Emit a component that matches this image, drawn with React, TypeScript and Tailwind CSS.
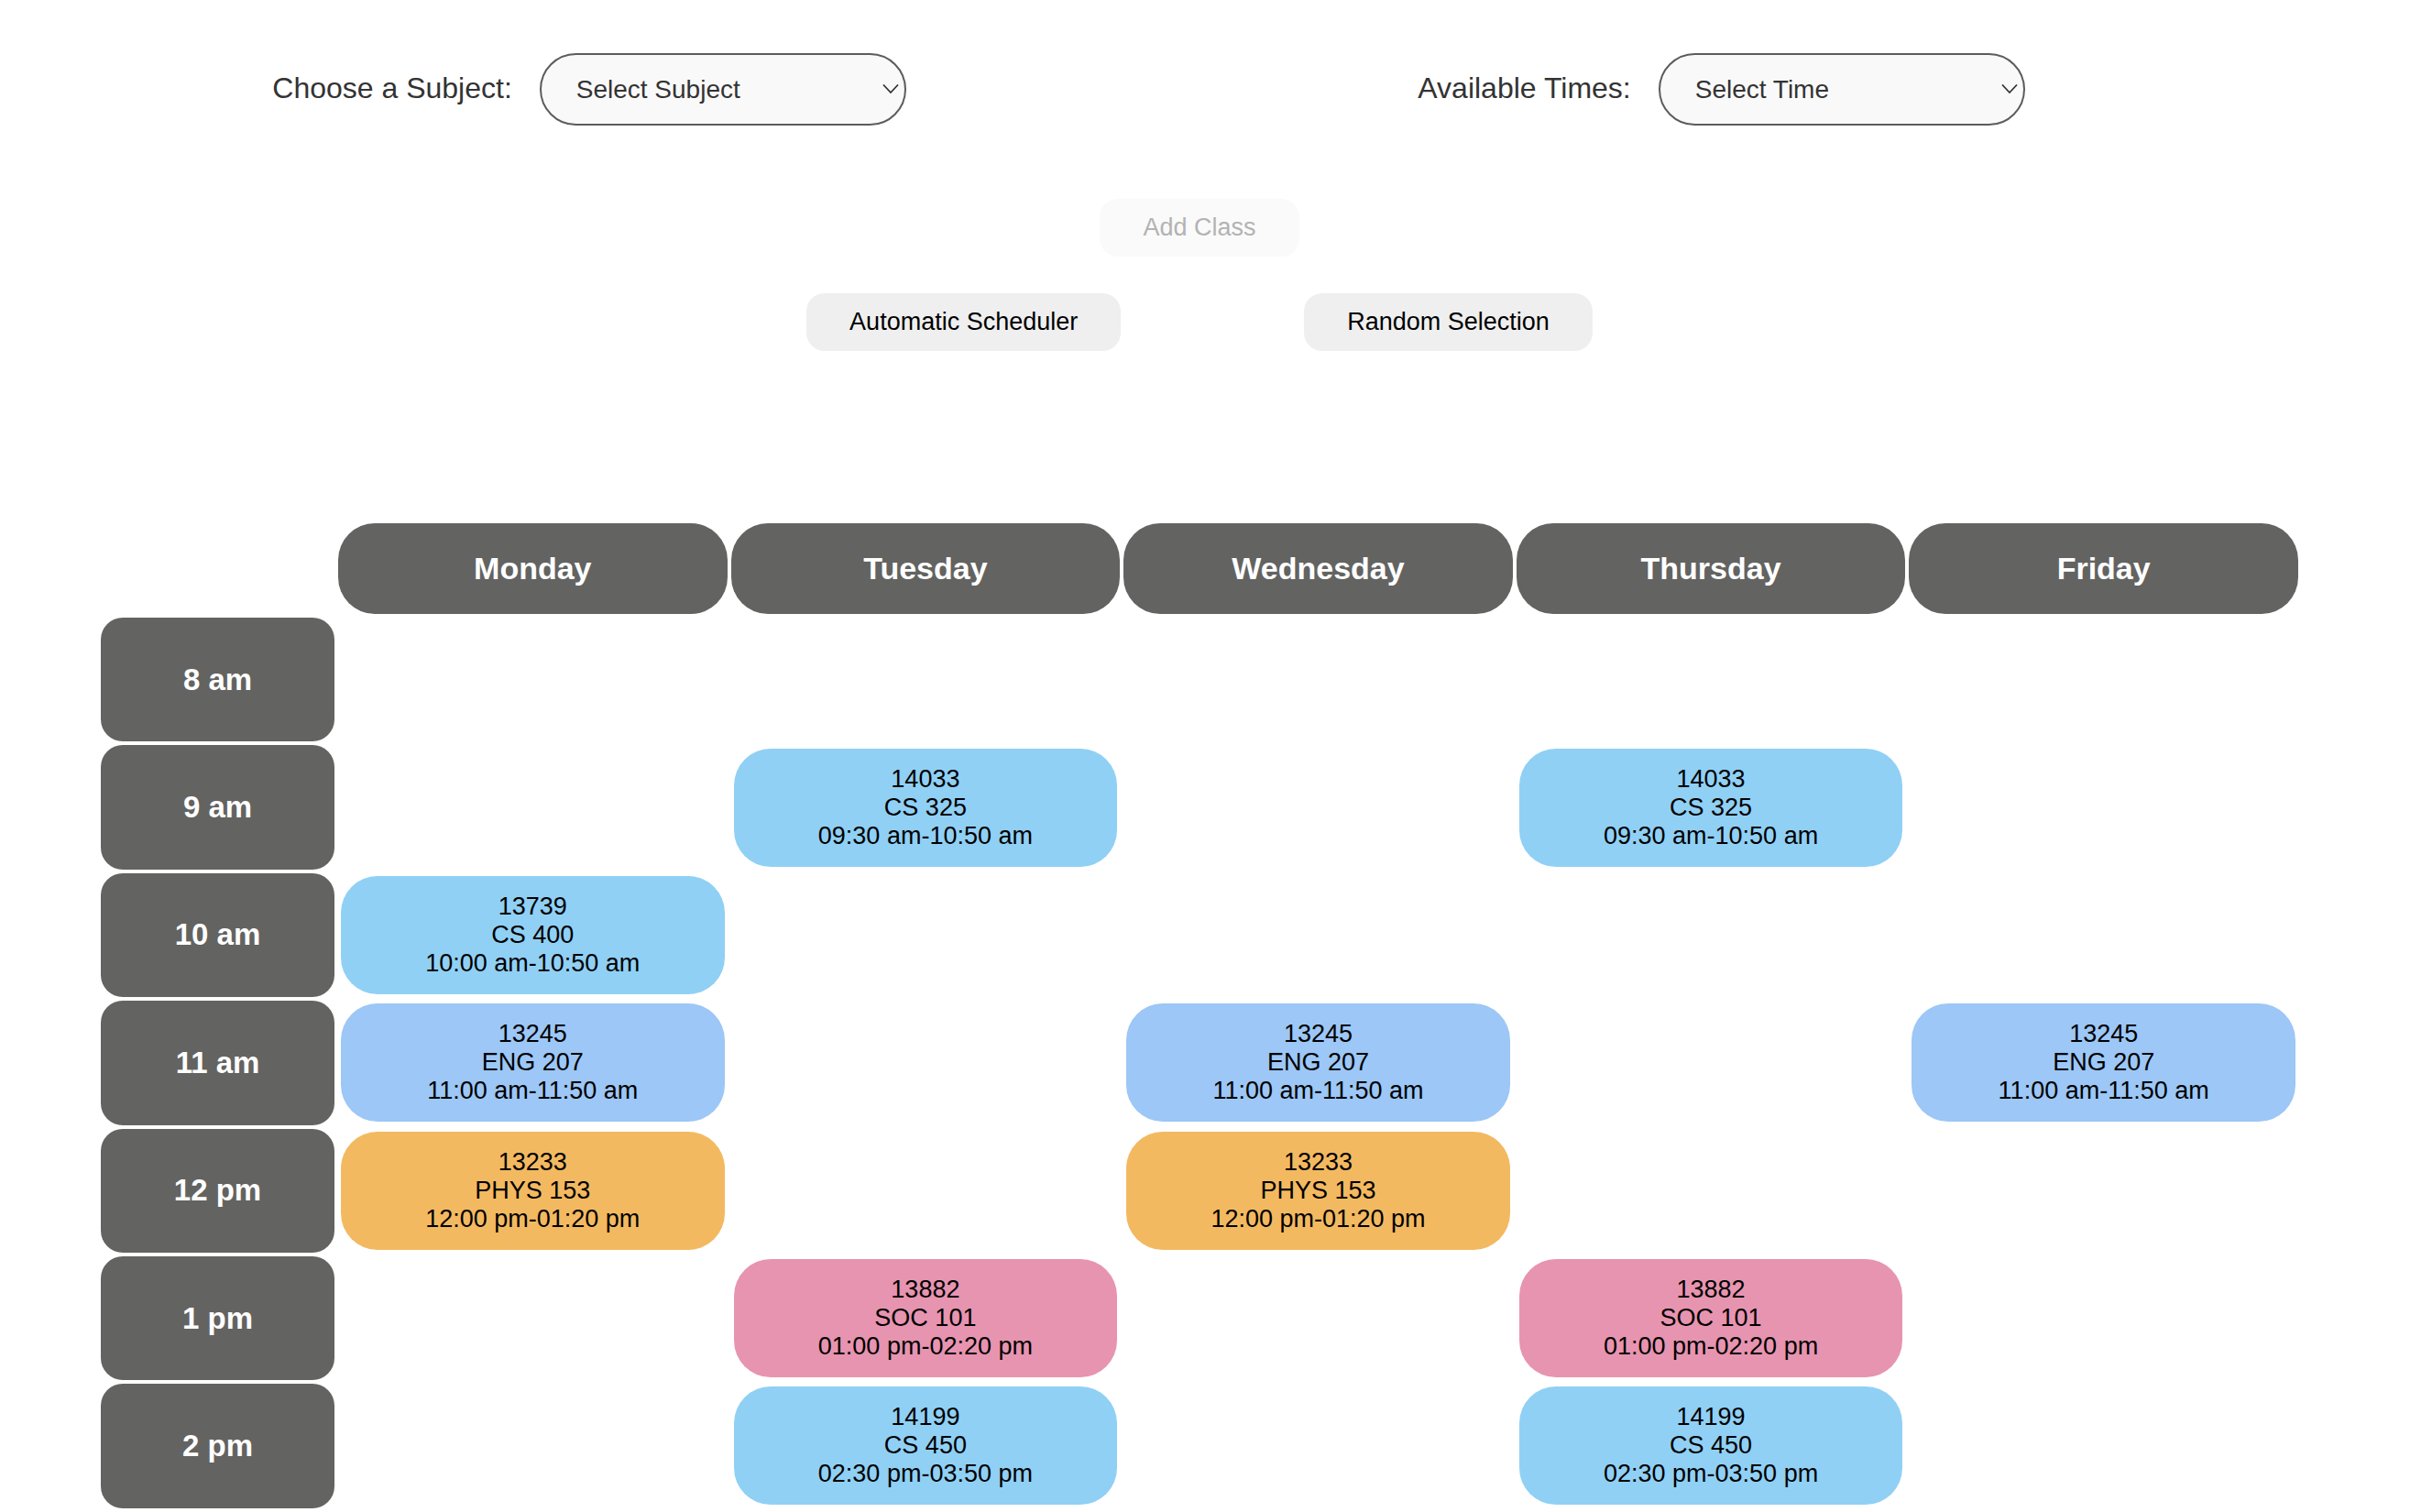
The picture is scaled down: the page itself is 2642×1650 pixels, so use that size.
import React from "react";

type Course = {
  crn: string;
  name: string;
  time: string;
  color: string;
};

const days = ["Monday", "Tuesday", "Wednesday", "Thursday", "Friday"];

const cs325: Course = { crn: "14033", name: "CS 325", time: "09:30 am-10:50 am", color: "bg-[#90d0f5]" };
const cs400: Course = { crn: "13739", name: "CS 400", time: "10:00 am-10:50 am", color: "bg-[#90d0f5]" };
const eng207: Course = { crn: "13245", name: "ENG 207", time: "11:00 am-11:50 am", color: "bg-[#9cc7f6]" };
const phys153: Course = { crn: "13233", name: "PHYS 153", time: "12:00 pm-01:20 pm", color: "bg-[#f3b961]" };
const soc101: Course = { crn: "13882", name: "SOC 101", time: "01:00 pm-02:20 pm", color: "bg-[#e794b0]" };
const cs450: Course = { crn: "14199", name: "CS 450", time: "02:30 pm-03:50 pm", color: "bg-[#90d0f5]" };

const rows: { hour: string; cells: (Course | null)[] }[] = [
  { hour: "8 am", cells: [null, null, null, null, null] },
  { hour: "9 am", cells: [null, cs325, null, cs325, null] },
  { hour: "10 am", cells: [cs400, null, null, null, null] },
  { hour: "11 am", cells: [eng207, null, eng207, null, eng207] },
  { hour: "12 pm", cells: [phys153, null, phys153, null, null] },
  { hour: "1 pm", cells: [null, soc101, null, soc101, null] },
  { hour: "2 pm", cells: [null, cs450, null, cs450, null] },
  { hour: "", cells: [null, null, null, null, null] },
];

function Picker({ id, label, placeholder }: { id: string; label: string; placeholder: string }) {
  return (
    <div className="flex items-baseline gap-[30px] text-[#333333]">
      <label htmlFor={id} className="text-[32px] leading-[37px]">
        {label}
      </label>
      <div className="relative">
        <select
          id={id}
          className="block h-[79px] w-[400px] appearance-none rounded-[40px] border-2 border-[#5c5c5c] bg-[#f9f9f9] px-[38px] text-[28px]"
        >
          <option>{placeholder}</option>
        </select>
        <svg
          aria-hidden="true"
          viewBox="0 0 18 10"
          className="pointer-events-none absolute top-[34px] right-2 h-[10px] w-[18px]"
          fill="none"
          stroke="#333333"
          strokeWidth="1.7"
        >
          <path d="M1 0.5 L9 9 L17 0.5" />
        </svg>
      </div>
    </div>
  );
}

function ActionButton({ children, disabled }: { children: React.ReactNode; disabled?: boolean }) {
  return (
    <button
      type="button"
      disabled={disabled}
      className="h-[63px] rounded-[20px] bg-[#efefef] px-[47px] text-[27px] text-black disabled:bg-[#fafafa] disabled:text-[#b3b3b3]"
    >
      {children}
    </button>
  );
}

function CourseCard({ course }: { course: Course }) {
  return (
    <div
      className={`flex h-[129px] flex-col items-center justify-center rounded-[40px] text-[27px] leading-[31px] text-black ${course.color}`}
    >
      <span>{course.crn}</span>
      <span>{course.name}</span>
      <span>{course.time}</span>
    </div>
  );
}

export default function App() {
  return (
    <main className="h-screen overflow-hidden bg-white pr-6 font-['Liberation_Sans',Arial,sans-serif]">
      <div className="flex justify-around pt-[58px] pr-[129px] pl-[18px]">
        <Picker id="subject" label="Choose a Subject:" placeholder="Select Subject" />
        <Picker id="time" label="Available Times:" placeholder="Select Time" />
      </div>

      <div className="mt-20 flex justify-center">
        <ActionButton disabled>Add Class</ActionButton>
      </div>
      <div className="mt-10 flex justify-center gap-[200px]">
        <ActionButton>Automatic Scheduler</ActionButton>
        <ActionButton>Random Selection</ActionButton>
      </div>

      <div className="mx-[106px] mt-[184px]">
        <table className="h-[1222px] w-full table-fixed border-separate border-spacing-1 text-center">
          <thead>
            <tr className="h-[99px]">
              <td className="w-[255px]" />
              {days.map((day) => (
                <th key={day} scope="col" className="rounded-[40px] bg-[#636361] text-[34px] leading-[39px] font-bold text-white">
                  {day}
                </th>
              ))}
            </tr>
          </thead>
          <tbody>
            {rows.map((row, r) => (
              <tr key={r} className="h-[135px]">
                <th scope="row" className="rounded-3xl bg-[#636361] text-[33px] leading-[38px] font-bold text-white">
                  {row.hour}
                </th>
                {row.cells.map((course, i) => (
                  <td key={days[i]} className="p-[3px]">
                    {course && <CourseCard course={course} />}
                  </td>
                ))}
              </tr>
            ))}
          </tbody>
        </table>
      </div>
    </main>
  );
}
